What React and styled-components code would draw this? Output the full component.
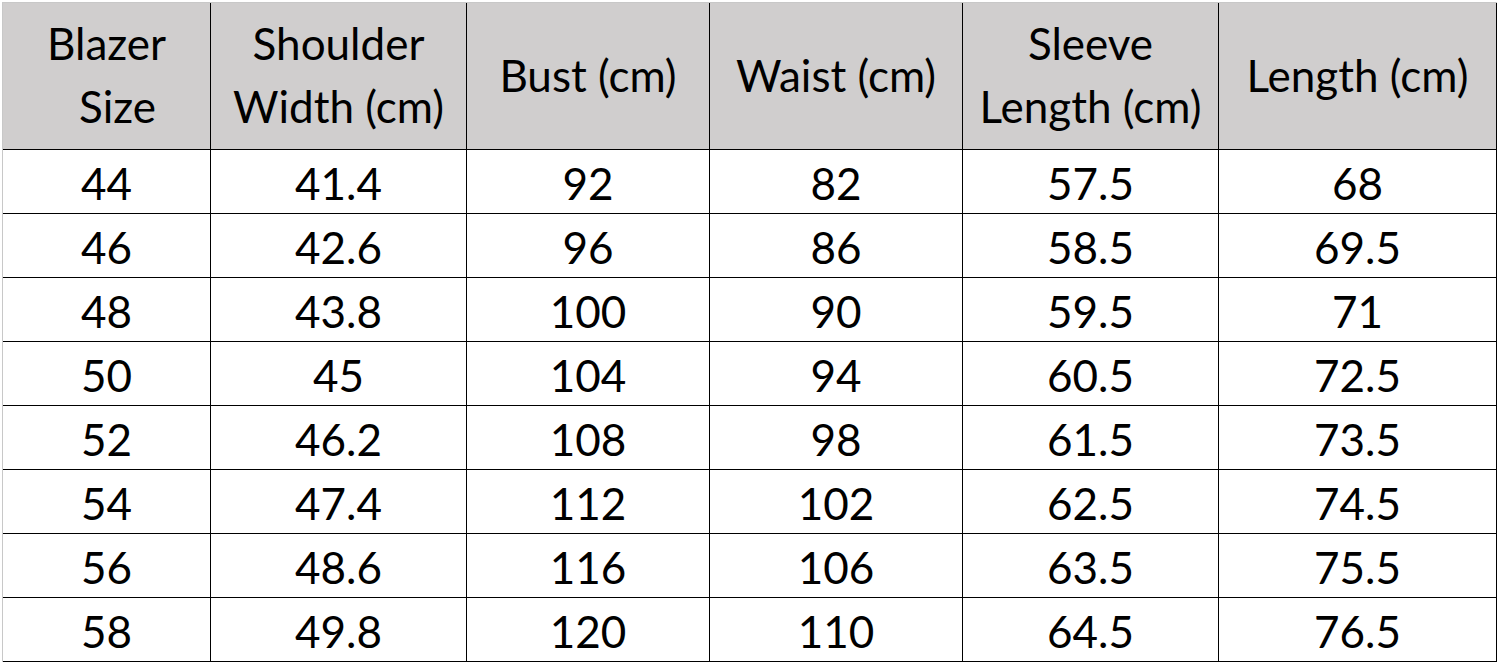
import React from 'react'
import styled, { createGlobalStyle } from 'styled-components'

const GlobalStyle = createGlobalStyle`
  html, body {
    margin: 0;
    padding: 0;
    background: #ffffff;
  }
  body {
    font-family: Lato, "Open Sans", "Liberation Sans", sans-serif;
    color: #000;
  }
`

const Sheet = styled.div`
  padding: 2px 0 0 2px;
  width: 1499px;
  height: 665px;
  box-sizing: border-box;
  background: #fff;
`

const Grid = styled.div`
  display: grid;
  grid-template-columns: 208px 256px 243px 253px 256px 278px;
  grid-template-rows: 147px repeat(8, 64px);
  width: max-content;
  border-top: 1px solid #c8c8c8;
  border-left: 1px solid #c8c8c8;
`

const Cell = styled.div`
  box-sizing: border-box;
  display: flex;
  align-items: center;
  justify-content: center;
  text-align: center;
  border-right: 1px solid #000;
  border-bottom: 1px solid #000;
  font-size: 44px;
  color: #000;
`

const HeadCell = styled(Cell)`
  background: #d0cece;
  line-height: 63px;
  padding-bottom: 2px;
`

const HeadLine = styled.div`
  padding-left: ${(p) => p.$indent || 0}px;
  white-space: nowrap;
`

const DataCell = styled(Cell)`
  background: #fff;
  padding-top: 3px;
`

const headers = [
  [['Blazer', 0], ['Size', 22]],
  [['Shoulder', 0], ['Width (cm)', 0]],
  [['Bust (cm)', 0]],
  [['Waist (cm)', 0]],
  [['Sleeve', 0], ['Length (cm)', 0]],
  [['Length (cm)', 0]],
]

const rows = [
  ['44', '41.4', '92', '82', '57.5', '68'],
  ['46', '42.6', '96', '86', '58.5', '69.5'],
  ['48', '43.8', '100', '90', '59.5', '71'],
  ['50', '45', '104', '94', '60.5', '72.5'],
  ['52', '46.2', '108', '98', '61.5', '73.5'],
  ['54', '47.4', '112', '102', '62.5', '74.5'],
  ['56', '48.6', '116', '106', '63.5', '75.5'],
  ['58', '49.8', '120', '110', '64.5', '76.5'],
]

function App() {
  return (
    <>
      <GlobalStyle />
      <Sheet>
        <Grid>
          {headers.map((lines, i) => (
            <HeadCell key={'h' + i}>
              <div>
                {lines.map(([text, indent], j) => (
                  <HeadLine key={j} $indent={indent}>
                    {text}
                  </HeadLine>
                ))}
              </div>
            </HeadCell>
          ))}
          {rows.map((row, r) =>
            row.map((v, c) => <DataCell key={r + '-' + c}>{v}</DataCell>)
          )}
        </Grid>
      </Sheet>
    </>
  )
}

export default App
